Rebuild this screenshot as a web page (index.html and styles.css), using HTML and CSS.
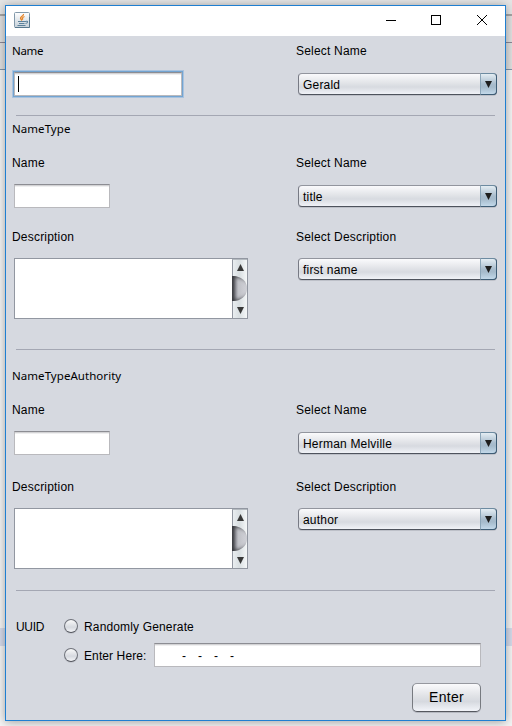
FILE: index.html
```html
<!DOCTYPE html>
<html lang="en">
<head>
<meta charset="utf-8">
<title>Name</title>
<link rel="stylesheet" href="styles.css">
</head>
<body>
<main class="window">
  <header class="titlebar">
    <svg class="java" width="16" height="16" viewBox="0 0 16 16">
      <defs><linearGradient id="tile" x2="0" y2="1"><stop stop-color="#fff"/><stop offset="1" stop-color="#c5d0d9"/></linearGradient></defs>
      <rect x=".5" y=".5" width="15" height="15" rx="1" fill="url(#tile)" stroke="#8299aa"/>
      <path d="M1 15.500H15.500V5" fill="none" stroke="#57788e"/>
      <path d="M9.500 2C10 4 6 4.500 6.500 6.500L8 8.500M10.500 4.500C8 5.500 8 6.500 9 7.500" fill="none" stroke="#e78222" stroke-width="1.300"/>
      <path d="M4 9.500H11.500M5 11.500H10.500M3.500 13.500H11.500M11.500 9.500C14.500 8.500 14 11 11.500 11.500" fill="none" stroke="#5b819b" stroke-width="1.100"/>
    </svg>
    <svg class="controls" width="102" height="12" viewBox="0 0 102 12" fill="none" stroke="#000">
      <path d="M0 6.500H10"/><rect x="45.500" y="1.500" width="9" height="9"/><path d="M91 1L101 11M101 1L91 11"/>
    </svg>
  </header>
  <form class="form">
    <section class="person">
      <div class="row labels"><span class="ui">Name</span><span>Select Name</span></div>
      <div class="row fields"><div class="input focused"><i class="caret"></i></div><div class="combo"><span>Gerald</span><b><svg width="9" height="9"><path d="M1 1H8L4.500 8Z"/></svg></b></div></div>
    </section>
    <hr>
    <section class="type">
      <h2 class="ui spaced">NameType</h2>
      <div class="row labels"><span>Name</span><span>Select Name</span></div>
      <div class="row fields"><div class="input"></div><div class="combo"><span>title</span><b><svg width="9" height="9"><path d="M1 1H8L4.500 8Z"/></svg></b></div></div>
      <div class="row labels desc"><span>Description</span><span>Select Description</span></div>
      <div class="row areas"><div class="area"><div class="scroll"><svg width="9" height="8"><path d="M1 7H8L4.500 0Z"/></svg><i class="thumb"></i><svg width="9" height="8"><path d="M1 1H8L4.500 8Z"/></svg></div></div><div class="combo"><span>first name</span><b><svg width="9" height="9"><path d="M1 1H8L4.500 8Z"/></svg></b></div></div>
    </section>
    <hr>
    <section class="authority">
      <h2 class="ui spaced">NameTypeAuthority</h2>
      <div class="row labels"><span>Name</span><span>Select Name</span></div>
      <div class="row fields"><div class="input"></div><div class="combo"><span>Herman Melville</span><b><svg width="9" height="9"><path d="M1 1H8L4.500 8Z"/></svg></b></div></div>
      <div class="row labels desc"><span>Description</span><span>Select Description</span></div>
      <div class="row areas"><div class="area"><div class="scroll"><svg width="9" height="8"><path d="M1 7H8L4.500 0Z"/></svg><i class="thumb"></i><svg width="9" height="8"><path d="M1 1H8L4.500 8Z"/></svg></div></div><div class="combo"><span>author</span><b><svg width="9" height="9"><path d="M1 1H8L4.500 8Z"/></svg></b></div></div>
    </section>
    <hr>
    <section class="uuid">
      <div class="random"><span class="uuid-label">UUID</span><i class="radio"></i><span>Randomly Generate</span></div>
      <div class="manual"><i class="radio"></i><span class="here">Enter Here:</span><div class="input mask"><span>-</span><span>-</span><span>-</span><span>-</span></div></div>
    </section>
    <button class="enter" type="button">Enter</button>
  </form>
</main>
</body>
</html>
```
FILE: styles.css
```css
* { box-sizing: border-box; }
body {
  margin: 0;
  width: 512px;
  height: 726px;
  overflow: hidden;
  padding: 5px;
  background: linear-gradient(#e5e5e5 0 14px, #a5a5a5 14px 16px, #e0e0e0 16px 42px, #8c8795 42px 43px, #e0e0e0 43px 69px, #7f94aa 69px 70px, #f4f4f4 70px 628px, #d5daea 628px 646px, #f4f4f4 646px);
  font: 12px/16px "Liberation Sans", Arial, sans-serif;
  letter-spacing: .2px;
  color: #000;
}
.window {
  width: 501px;
  height: 716px;
  border: 1px solid #1f7fd1;
  background: #d6d9e0;
  box-shadow: 0 1px 9px rgba(0, 0, 0, .35);
}
.titlebar {
  display: flex;
  justify-content: space-between;
  height: 30px;
  padding: 6px 17px 0 8px;
  background: #fff;
}
.controls { margin: 2px 0 0; }
.form { padding: 6px 8px 0 6px; }
.row { display: grid; grid-template-columns: 284px 1fr; align-items: start; }
.labels { height: 16px; padding-top: 1px; }
.desc { padding-top: 0; }
.fields { margin-top: 14px; height: 24px; padding-left: 2px; }
.fields .combo { margin-top: 1px; }
.areas { margin-top: 13px; height: 61px; padding-left: 2px; }
hr { height: 1px; margin: 0 2px 0 4px; border: 0; background: #a4a7b3; }
h2 { margin: 0; height: 16px; font-weight: normal; }
.ui { font: 11.5px/16px "Noto Sans", "DejaVu Sans", sans-serif; letter-spacing: -.35px; }
.spaced { letter-spacing: .05px; }
.person { height: 73px; }
.type { height: 233px; padding-top: 5px; }
.type h2 + .row, .authority h2 + .row { margin-top: 17px; }
.type .desc { margin-top: 21px; }
.authority { height: 240px; padding-top: 18px; }
.authority .desc { margin-top: 24px; }
.input {
  width: 96px;
  height: 24px;
  border: 1px solid #b9b9bd;
  border-top-color: #8c8d93;
  background: #fff;
  box-shadow: inset 0 1px #d3d3d5, inset 0 2px #efeff0;
}
.focused {
  width: 168px;
  padding: 3px 0 0 3px;
  box-shadow: 0 0 0 1px #73a4d1, 0 0 0 2px #a9c3df, inset 0 1px #d3d3d5, inset 0 2px #efeff0;
}
.caret { display: block; width: 1px; height: 16px; background: #000; }
.combo {
  display: flex;
  width: 199px;
  height: 22px;
  border: 1px solid #777a84;
  border-top-color: #92959e;
  border-bottom-color: #4e535d;
  border-radius: 4px;
  background: linear-gradient(#fafafc, #e2e4e8 45%, #d7dae0 65%, #f0f2f7);
  box-shadow: 0 1px #bdc0c8;
}
.combo span { flex: 1; padding: 3px 0 0 4px; }
.combo b {
  width: 17px;
  margin: -1px;
  padding: 6px 0 0 3px;
  line-height: 0;
  border: 1px solid #3e5d76;
  border-top-color: #6d8ba1;
  border-left-color: #8ba5b8;
  border-radius: 0 4px 4px 0;
  background: linear-gradient(#e4edf3, #a8bccd 50%, #a5bacb 65%, #c3d9ea);
}
svg { display: block; flex: none; }
.combo path { fill: #1e1e1e; }
.area {
  display: flex;
  justify-content: flex-end;
  width: 234px;
  height: 61px;
  border: 1px solid #9297a1;
  background: #fff;
}
.scroll {
  display: flex;
  flex-direction: column;
  align-items: center;
  width: 15px;
  padding: 4px 0;
  border-left: 1px solid #9297a1;
  border-top: 1px solid #b4bac0;
  background: linear-gradient(90deg, #e9edf0, #d9dfe2 45%, #f5f7f8);
}
.scroll path { fill: #383838; }
.thumb {
  width: 15px;
  height: 25px;
  margin: 4px 0 5px -1px;
  background: linear-gradient(90deg, #6f7076, #bfc0c6 40%, #d2d3d9);
  border-radius: 0 14px 14px 0 / 0 12px 12px 0;
  box-shadow: inset 3px 3px 4px -2px #35363b, inset 3px -3px 4px -2px #35363b;
}
.uuid { padding: 27px 16px 0 4px; }
.random { display: flex; height: 16px; }
.random span { padding-top: 1px; letter-spacing: .15px; }
.random .uuid-label { width: 48px; letter-spacing: -.3px; }
.radio {
  width: 14px;
  height: 14px;
  margin: 1px 6px 0 0;
  border: 1px solid #6f727a;
  border-bottom-color: #50535b;
  border-radius: 50%;
  background: linear-gradient(#fafafa, #d6d9df 60%, #f4f5f8);
  box-shadow: 0 1px #c4c7ce;
}
.manual { display: flex; margin-top: 9px; padding-left: 48px; }
.manual .radio { margin-top: 5px; }
.here { width: 70px; padding-top: 5px; letter-spacing: .1px; }
.mask { display: flex; gap: 12px; width: 327px; padding: 4px 0 0 27px; }
.mask span { width: 4px; }
.enter {
  display: block;
  width: 69px;
  height: 29px;
  margin: 16px 16px 0 auto;
  padding: 0;
  border: 1px solid #777a80;
  border-top-color: #96989f;
  border-bottom-color: #55585f;
  border-radius: 5px;
  background: linear-gradient(#fafafc, #e0e2e6 45%, #d6d9df 65%, #f2f4f9);
  box-shadow: 0 1px #b5b8c0;
  font: 14px/17px "Liberation Sans", Arial, sans-serif;
  letter-spacing: .3px;
  color: #000;
}
```
